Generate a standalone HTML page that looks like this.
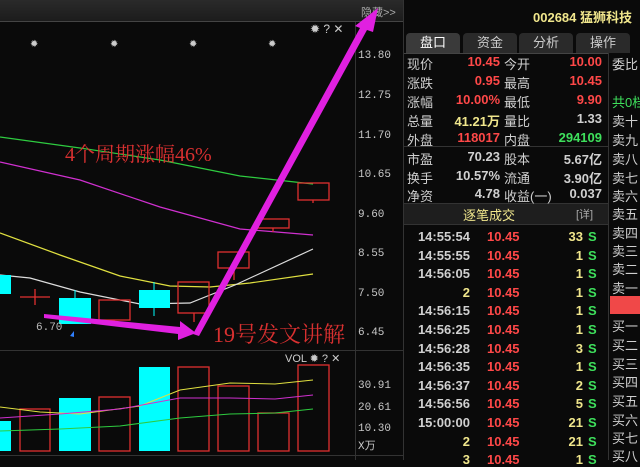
<!DOCTYPE html><html><head><meta charset="utf-8"><style>
body{margin:0;width:640px;height:460px;background:#0a0a0a;overflow:hidden;position:relative;font-family:"Liberation Sans","Noto Sans CJK SC",sans-serif;}
.a{position:absolute;white-space:nowrap;}
.ax{position:absolute;left:358px;color:#c8c8c8;font:11px "Liberation Mono","Noto Sans CJK SC",monospace;white-space:nowrap;}
.r{color:#ff4848}.y{color:#f0e68c}.g{color:#3ee05c}.w{color:#d0d0d0}
.lab{position:absolute;color:#cfcfcf;font-size:13px;white-space:nowrap;}
.num{position:absolute;text-align:right;font-size:13px;font-weight:bold;white-space:nowrap;}
.tab{position:absolute;top:33px;height:20px;line-height:20px;text-align:center;color:#ccc;font-size:13px;background:#2a2a2a;border-radius:4px 4px 0 0;}
.tr{position:absolute;font-size:13px;font-weight:bold;white-space:nowrap;}
.sl{position:absolute;left:612px;color:#cfcfcf;font-size:13px;white-space:nowrap;}
</style></head><body>
<div class="a" style="left:0;top:0;width:403px;height:21px;background:linear-gradient(#2a2a2a,#1c1c1c);border-bottom:1px solid #444"></div>
<div class="a" style="left:361px;top:4px;color:#aaa;font-size:11px">隐藏&gt;&gt;</div>
<div class="a" style="left:355px;top:22px;width:1px;height:438px;background:#333"></div>
<div class="a" style="left:0;top:350px;width:403px;height:1px;background:#333"></div>
<div class="a" style="left:0;top:455px;width:403px;height:1px;background:#333"></div>
<div class="a" style="left:403px;top:0;width:1px;height:460px;background:#333"></div>
<div class="a" style="left:310px;top:22px;color:#ccc;font-size:12px">✹ ? ✕</div>
<div class="a" style="left:285px;top:352px;color:#ccc;font-size:11px">VOL ✹ ? ✕</div>
<div class="ax" style="top:50px">13.80</div><div class="ax" style="top:90px">12.75</div><div class="ax" style="top:130px">11.70</div><div class="ax" style="top:169px">10.65</div><div class="ax" style="top:209px">9.60</div><div class="ax" style="top:248px">8.55</div><div class="ax" style="top:288px">7.50</div><div class="ax" style="top:327px">6.45</div>
<div class="ax" style="top:380px">30.91</div><div class="ax" style="top:402px">20.61</div><div class="ax" style="top:423px">10.30</div><div class="ax" style="top:437px">X万</div>
<svg class="a" style="left:0;top:0" width="400" height="460">
<g fill="#ccc" font-size="10"><text x="30" y="47">✹</text><text x="110" y="47">✹</text><text x="189" y="47">✹</text><text x="268" y="47">✹</text></g>
<polyline fill="none" stroke="#2ecc40" stroke-width="1.2" points="0,137 80,148 160,160 240,176 313,184"/>
<polyline fill="none" stroke="#d030d0" stroke-width="1.2" points="0,162 80,180 160,207 240,229 313,235"/>
<polyline fill="none" stroke="#e0e040" stroke-width="1.2" points="0,233 60,255 120,276 170,286 210,287 250,283 313,274"/>
<polyline fill="none" stroke="#ddd" stroke-width="1.2" points="0,275 30,278 80,292 140,304 190,303 235,285 313,249"/>
<g fill="#00ffff"><rect x="0" y="275" width="11" height="19"/><rect x="59" y="298" width="32" height="26"/><rect x="139" y="290" width="31" height="18"/></g>
<g stroke="#00ffff"><line x1="75" y1="290" x2="75" y2="298"/><line x1="154" y1="282" x2="154" y2="316"/></g>
<g fill="none" stroke="#e03030" stroke-width="1.3"><line x1="20" y1="297" x2="50" y2="297"/><line x1="35" y1="289" x2="35" y2="305"/>
<rect x="99" y="300" width="31" height="20"/><line x1="114" y1="320" x2="114" y2="325"/>
<rect x="178" y="282" width="31" height="31"/><line x1="194" y1="313" x2="194" y2="322"/>
<rect x="218" y="252" width="31" height="16"/><line x1="234" y1="268" x2="234" y2="280"/>
<rect x="258" y="219" width="31" height="9"/><line x1="273" y1="228" x2="273" y2="232"/>
<rect x="298" y="183" width="31" height="17"/><line x1="313" y1="200" x2="313" y2="203"/>
<rect x="20" y="409" width="30" height="42"/><rect x="99" y="397" width="31" height="54"/><rect x="178" y="367" width="31" height="84"/><rect x="218" y="386" width="31" height="65"/><rect x="258" y="413" width="31" height="38"/><rect x="298" y="365" width="31" height="86"/></g>
<g fill="#00ffff"><rect x="0" y="421" width="11" height="30"/><rect x="59" y="398" width="32" height="53"/><rect x="139" y="367" width="31" height="84"/></g>
<polyline fill="none" stroke="#e0e040" points="0,407 40,412 80,414 140,406 180,390 230,383 275,384 313,380"/>
<polyline fill="none" stroke="#d030d0" points="0,418 60,414 120,409 180,398 230,398 275,399 313,395"/>
<polyline fill="none" stroke="#2ecc40" points="0,431 60,429 120,426 180,418 230,414 275,413 313,409"/>
<text x="36" y="330" fill="#bbb" font-size="11" font-family="Liberation Mono">6.70</text>
<path d="M70,336 l4,-5 v6z" fill="#3080ff"/>
<path d="M44,314 L180,327 L180,321 L196,333 L178,340 L178,334 L44,318Z" fill="#e020e0"/>
<path d="M193,334 L360,28 L355,26 L378,8 L373,32 L367,30 L199,336Z" fill="#e020e0"/>
<text x="65" y="161" fill="#d83030" font-size="20" font-family="Liberation Serif,Noto Serif CJK SC,serif">4个周期涨幅46%</text>
<text x="213" y="342" fill="#d83030" font-size="22" font-family="Liberation Serif,Noto Serif CJK SC,serif">19号发文讲解</text>
</svg>
<div class="a y" style="left:533px;top:7px;font-size:13px;font-weight:bold">002684 猛狮科技</div>
<div class="tab" style="left:406px;width:54px;background:#3a3a3a;color:#fff">盘口</div>
<div class="tab" style="left:463px;width:54px">资金</div>
<div class="tab" style="left:519px;width:54px">分析</div>
<div class="tab" style="left:576px;width:54px">操作</div>
<div class="a" style="left:404px;top:53px;width:204px;height:1px;background:#444"></div>
<div class="a" style="left:608px;top:53px;width:1px;height:407px;background:#333"></div>
<div class="a" style="left:404px;top:146px;width:204px;height:1px;background:#333"></div>
<div class="a" style="left:404px;top:203px;width:204px;height:20px;background:#1e1e1e;border-top:1px solid #333;border-bottom:1px solid #333"></div>
<div class="a y" style="left:463px;top:205px;font-size:13px">逐笔成交</div>
<div class="a" style="left:576px;top:206px;color:#aaa;font-size:11px">[详]</div>
<div class="lab" style="left:407px;top:54px">现价</div><div class="num r" style="left:440px;width:60px;top:54px">10.45</div><div class="lab" style="left:504px;top:54px">今开</div><div class="num r" style="left:540px;width:62px;top:54px">10.00</div>
<div class="lab" style="left:407px;top:73px">涨跌</div><div class="num r" style="left:440px;width:60px;top:73px">0.95</div><div class="lab" style="left:504px;top:73px">最高</div><div class="num r" style="left:540px;width:62px;top:73px">10.45</div>
<div class="lab" style="left:407px;top:92px">涨幅</div><div class="num r" style="left:440px;width:60px;top:92px">10.00%</div><div class="lab" style="left:504px;top:92px">最低</div><div class="num r" style="left:540px;width:62px;top:92px">9.90</div>
<div class="lab" style="left:407px;top:111px">总量</div><div class="num y" style="left:440px;width:60px;top:111px">41.21万</div><div class="lab" style="left:504px;top:111px">量比</div><div class="num w" style="left:540px;width:62px;top:111px">1.33</div>
<div class="lab" style="left:407px;top:130px">外盘</div><div class="num r" style="left:440px;width:60px;top:130px">118017</div><div class="lab" style="left:504px;top:130px">内盘</div><div class="num g" style="left:540px;width:62px;top:130px">294109</div>
<div class="lab" style="left:407px;top:149px">市盈</div><div class="num w" style="left:440px;width:60px;top:149px">70.23</div><div class="lab" style="left:504px;top:149px">股本</div><div class="num w" style="left:540px;width:62px;top:149px">5.67亿</div>
<div class="lab" style="left:407px;top:168px">换手</div><div class="num w" style="left:440px;width:60px;top:168px">10.57%</div><div class="lab" style="left:504px;top:168px">流通</div><div class="num w" style="left:540px;width:62px;top:168px">3.90亿</div>
<div class="lab" style="left:407px;top:186px">净资</div><div class="num w" style="left:440px;width:60px;top:186px">4.78</div><div class="lab" style="left:504px;top:186px">收益(一)</div><div class="num w" style="left:540px;width:62px;top:186px">0.037</div>
<div id="t"></div>
<script>
var d=[["14:55:54",33],["14:55:55",1],["14:56:05",1],["2",1],["14:56:15",1],["14:56:25",1],["14:56:28",3],["14:56:35",1],["14:56:37",2],["14:56:56",5],["15:00:00",21],["2",21],["3",1]];
var h="";d.forEach(function(r,i){var y=229+i*18.6;var tc=r[0].length>2?"#d0d0d0":"#f0e68c";
h+='<div class="tr" style="left:400px;width:70px;text-align:right;top:'+y+'px;color:'+tc+'">'+r[0]+'</div><div class="tr r" style="left:487px;top:'+y+'px">10.45</div><div class="tr y" style="left:540px;width:43px;text-align:right;top:'+y+'px">'+r[1]+'</div><div class="tr g" style="left:588px;top:'+y+'px">S</div>';});
var s=["委比","","共0档","卖十","卖九","卖八","卖七","卖六","卖五","卖四","卖三","卖二","卖一","","买一","买二","买三","买四","买五","买六","买七","买八"];
var ys=[54,73,92,111,130,149,168,186,204,223,241,259,278,0,316,335,354,372,391,410,428,446];
s.forEach(function(t,i){if(t)h+='<div class="sl" style="top:'+ys[i]+'px;'+(i==2?'color:#3ee05c':'')+'">'+t+'</div>';});
h+='<div class="a" style="left:610px;top:296px;width:30px;height:18px;background:#f04848"></div>';
document.getElementById("t").innerHTML=h;
</script>
</body></html>
